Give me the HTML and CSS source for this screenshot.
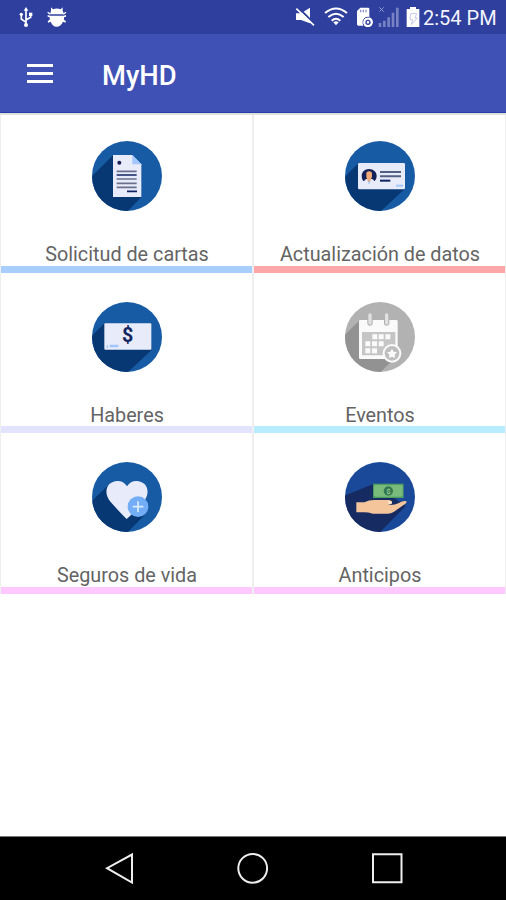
FILE: index.html
```html
<!DOCTYPE html>
<html lang="es">
<head>
<meta charset="utf-8">
<title>MyHD</title>
<link rel="stylesheet" href="styles.css">
</head>
<body>
<div class="screen">
  <div class="status">
    <svg class="usb" width="14" height="20" viewBox="57 21 42 60" fill="none" stroke="#fff" stroke-width="5">
      <path d="M78 28V74M78 67L64 57V44M78 60L92 52V41"/>
      <path d="M78 21l7 11H71z" fill="#fff" stroke="none"/>
      <circle cx="78" cy="75" r="6" fill="#fff" stroke="none"/><circle cx="64" cy="43" r="5" fill="#fff" stroke="none"/><path d="M87 38h10v10H87z" fill="#fff" stroke="none"/>
    </svg>
    <svg class="bug" width="20" height="20" viewBox="141 22 60 60" fill="#fff">
      <path d="M153 23l6 6q12-5 23 0l6-6v10q3 5 3 11h-40q0-6 2-11z"/>
      <path d="M150 48h41l7-2v5l-6 2v7l6 5-2 4-7-3q-7 15-19 15t-18-15l-7 3-2-4 6-5v-7l-6-2v-5z"/>
      <path d="M143 38l8 6M198 38l-8 6" stroke="#fff" stroke-width="4"/>
    </svg>
    <div class="tray">
      <svg width="20" height="20" viewBox="46 21 60 60" fill="#fff"><path d="M49 40h15l27-17v47L64 60H49z"/><path d="M55 22l51 51" stroke="#2f3f9e" stroke-width="6"/><path d="M50 26l53 50" stroke="#fff" stroke-width="5"/></svg>
      <svg class="wifi" width="24" height="20" viewBox="134 21 72 60" fill="none" stroke="#fff" stroke-width="6"><path d="M137 39q33-27 66 0M147 51q23-20 46 0M157 62q13-11 26 0"/><path d="M170 76l-8-9q8-6 16 0z" fill="#fff" stroke="none"/></svg>
      <svg class="sim" width="18" height="20" viewBox="228 22 54 60"><path fill="#fff" d="M231 34l10-10h23q4 0 4 4v25q10 3 10 14 0 13-14 15-6 0-11-4h-18q-4 0-4-4z"/><path d="M242 30v8M250 30v8M258 30v8" stroke="#8a94ca" stroke-width="4"/><path d="M252 80q-7-18 3-25 6-3 13-2" fill="none" stroke="#2f3f9e" stroke-width="3"/><circle cx="264" cy="68" r="14" fill="#fff"/><circle cx="264" cy="68" r="6" fill="none" stroke="#2f3f9e" stroke-width="4"/></svg>
      <svg class="signal" width="21" height="20" viewBox="294 22 63 60" fill="#7682c4"><path d="M296 70h8v12h-8zM309 63h8v19h-8zM322 53h8v29h-8zM335 39h8v43h-8zM348 24h8v58h-8z"/><path d="M298 23l13 13M311 23l-13 13" stroke="#929bd1" stroke-width="3"/></svg>
      <svg class="battery" width="14" height="20" viewBox="379 22 42 60"><path fill="#fff" d="M381 28h10v-6h18v6h10v54h-38z"/><path fill="none" stroke="#c6cae3" stroke-width="3" d="M393 42h18l-5 13h7l-18 20 4-15h-8z"/></svg>
      <span class="clock">2:54 PM</span>
    </div>
  </div>
  <header class="bar">
    <div class="menu"><i></i><i></i><i></i></div>
    <h1>MyHD</h1>
  </header>
  <main class="grid">
    <section class="tile first blue">
      <svg class="icon" viewBox="36 33 210 210">
        <clipPath id="disc"><circle cx="141" cy="138" r="105"/></clipPath>
        <g clip-path="url(#disc)"><path fill="#185ba5" d="M36 33h210v210H36z"/><path fill="#073873" d="M99 76L20 155v100h112l52-54z"/></g>
        <path fill="#e8ebf9" d="M99 75h58l27 28v98H99z"/><path fill="#a2c7ff" d="M157 75l27 28h-27z"/>
        <circle cx="118" cy="98" r="6" fill="#15215a"/>
        <path stroke="#69718f" stroke-width="5" d="M110 124h60M110 147h60M110 160h60M110 172h60"/><path stroke="#102364" stroke-width="5" d="M110 135h60M141 184h30"/>
      </svg><p>Solicitud de cartas</p>
    </section>
    <section class="tile first red">
      <svg class="icon" viewBox="36 33 210 210">
        <g clip-path="url(#disc)"><path fill="#185ba5" d="M36 33h210v210H36z"/><path fill="#073873" d="M76 100L20 156v100h110l85-79z"/></g>
        <rect x="75" y="99" width="141" height="79" rx="4" fill="#e8ebf9"/>
        <path fill="#142158" d="M91 153q-5-6-5-15c0-12 9-21 22-21s23 9 23 21q0 9-6 15z"/><path fill="#e8ebf9" d="M92 160q0-12 11-14h11q11 2 11 14z"/><path fill="#f1ac78" d="M100 128q8-8 17 0v12q-2 6-4 7v5l-5 5-5-5v-5q-3-3-3-7z"/><path stroke="#7eb1f2" stroke-width="3" d="M108 152v9"/>
        <path stroke="#526181" stroke-width="6" d="M141 126h63M141 139h63"/><path stroke="#102364" stroke-width="6" d="M141 152h31"/><path stroke="#a2c7ff" stroke-width="6" d="M189 167h21"/>
      </svg><p>Actualización de datos</p>
    </section>
    <section class="tile lavender">
      <svg class="icon" viewBox="36 33 210 210">
        <g clip-path="url(#disc)"><path fill="#185ba5" d="M36 33h210v210H36z"/><path fill="#073873" d="M73 97L20 150v106h110l85-79z"/></g>
        <rect x="73" y="97" width="141" height="79" rx="3" fill="#e8ebf9"/>
        <text class="dollar" x="143" y="153" text-anchor="middle">$</text><path stroke="#a2c7ff" stroke-width="8" d="M89 165h26M80 167h4"/>
      </svg><p>Haberes</p>
    </section>
    <section class="tile cyan">
      <svg class="icon" viewBox="36 33 210 210">
        <g clip-path="url(#disc)"><path fill="#b2b2b2" d="M36 33h210v210H36z"/><path fill="#929292" d="M78 90L20 146v110h110l70-69z"/></g>
        <path fill="#fafafa" d="M82 87h108q4 0 4 4v109q0 4-4 4H82q-4 0-4-4V91q0-4 4-4z"/>
        <path stroke="#b0b0b0" stroke-width="16" stroke-linecap="round" d="M111 76v20M161 76v20"/><path stroke="#e1e1e1" stroke-width="10" stroke-linecap="round" d="M111 72v24M161 72v24"/>
        <path fill="#c5c5c5" d="M87 123h100v70H87z"/><path stroke="#fafafa" stroke-width="15" d="M118 137h15m4 0h15m5 0h15M97 158h15m5 0h15m5 0h15M97 179h15m5 0h15"/>
        <circle cx="177" cy="187" r="28" fill="#fafafa"/><circle cx="177" cy="187" r="22" fill="#bebebe"/><path fill="#fafafa" d="M177 173l5 9 10 2-7 7 1 10-9-4-9 4 1-10-7-7 10-2z"/>
      </svg><p>Eventos</p>
    </section>
    <section class="tile pink">
      <svg class="icon" viewBox="36 33 210 210">
        <g clip-path="url(#disc)"><path fill="#185ba5" d="M36 33h210v210H36z"/><path fill="#073873" d="M83 104L20 165v90h112l67-68z"/></g>
        <path fill="#e8ebf9" d="M140 204Q124 189 92 153c-20-23-15-50 5-59 16-8 34-4 44 12 10-16 28-20 44-12 20 9 25 36 5 59q-32 36-50 51z"/>
        <circle cx="174" cy="167" r="31" fill="#73adf5"/><path stroke="#dcecff" stroke-width="5" d="M174 151v32M158 167h32"/>
      </svg><p>Seguros de vida</p>
    </section>
    <section class="tile pink">
      <svg class="icon" viewBox="36 33 210 210">
        <g clip-path="url(#disc)"><path fill="#1b499a" d="M36 33h210v210H36z"/><path fill="#152b61" d="M121 99L20 140v115h110l88-90z"/></g>
        <path fill="#4b9b62" d="M120 98h92v43h-92z"/><path fill="#78bb7a" d="M126 102h80l3 4v27l-4 4h-78l-4-4v-27z"/><circle cx="166" cy="120" r="14" fill="#347752"/><text class="coin" x="166" y="128" text-anchor="middle">$</text>
        <path fill="#f4c59b" d="M70 154h24q14-7 29-7h43q13 1 11 9-2 5-12 6 21 1 31-5 14-8 22-7 6 2-1 8l-35 25q-8 5-18 5h-44q-18-5-31-4H70z"/><path fill="#ffe6ca" d="M164 150h9q5 2 3 8-9 3-11-2z"/>
      </svg><p>Anticipos</p>
    </section>
  </main>
  <nav class="nav">
    <svg width="298" height="32" viewBox="0 0 298 32" fill="none" stroke="#eee" stroke-width="2">
      <path d="M27 2.5v28L2 16.2z"/><circle cx="147.7" cy="16.3" r="14.4"/><path d="M268 2.3h28.5v28H268z"/>
    </svg>
  </nav>
</div>
</body>
</html>
```
FILE: styles.css
```css
* { box-sizing: border-box; }
body { margin: 0; font-family: Roboto, sans-serif; background: #fff; }
.screen { width: 506px; height: 900px; display: flex; flex-direction: column; overflow: hidden; }
.status { height: 34px; background: #2f3f9e; display: flex; align-items: center; padding: 0 9px 0 19px; }
.bug { margin-left: 14px; }
.tray { margin-left: auto; display: flex; align-items: center; }
.wifi { margin-left: 9px; }
.sim { margin-left: 8px; }
.signal { margin-left: 4px; }
.battery { margin-left: 7px; }
.clock { width: 74px; margin-left: 3px; color: #f3f4fc; font-size: 20px; line-height: 34px; white-space: nowrap; padding-top: 2px; }
.bar { height: 79px; background: #3f51b5; border-bottom: 1px solid #263da7; display: flex; align-items: center; padding-left: 27px; }
.menu { width: 26px; display: grid; gap: 5px; }
.menu i { height: 3px; background: #fff; }
h1 { margin: 5px 0 0 49px; color: #fff; font-size: 27.4px; font-weight: 500; line-height: 32px; }
.grid { height: 481px; display: grid; grid-template-columns: 251px 251px; column-gap: 2px; grid-template-rows: 158px 160px 161px; padding: 0 1px; background: #eee; border-top: 2px solid #e0e0e0; }
.tile { display: flex; flex-direction: column; align-items: center; padding-top: 28.5px; background: #fff; border-bottom: 7px solid; }
.first { padding-top: 26px; }
.icon { width: 70px; height: 70px; flex: none; }
.tile p { margin: 32px 0 0; padding-left: 1px; color: #646464; font-size: 19.8px; line-height: 24px; white-space: nowrap; }
.blue { border-bottom-color: #a8ceff; }
.red { border-bottom-color: #ffa6a8; }
.lavender { border-bottom-color: #e2e4ff; }
.cyan { border-bottom-color: #b8edff; }
.pink { border-bottom-color: #ffc9ff; }
.dollar { font: 700 59px Roboto, sans-serif; fill: #13265f; }
.coin { font: 700 23px Roboto, sans-serif; fill: #8bc98a; }
.nav { height: 64px; margin-top: auto; background: #000; border-top: 1px solid #777; display: flex; align-items: center; justify-content: center; padding: 0 0 2px 1px; }
```
